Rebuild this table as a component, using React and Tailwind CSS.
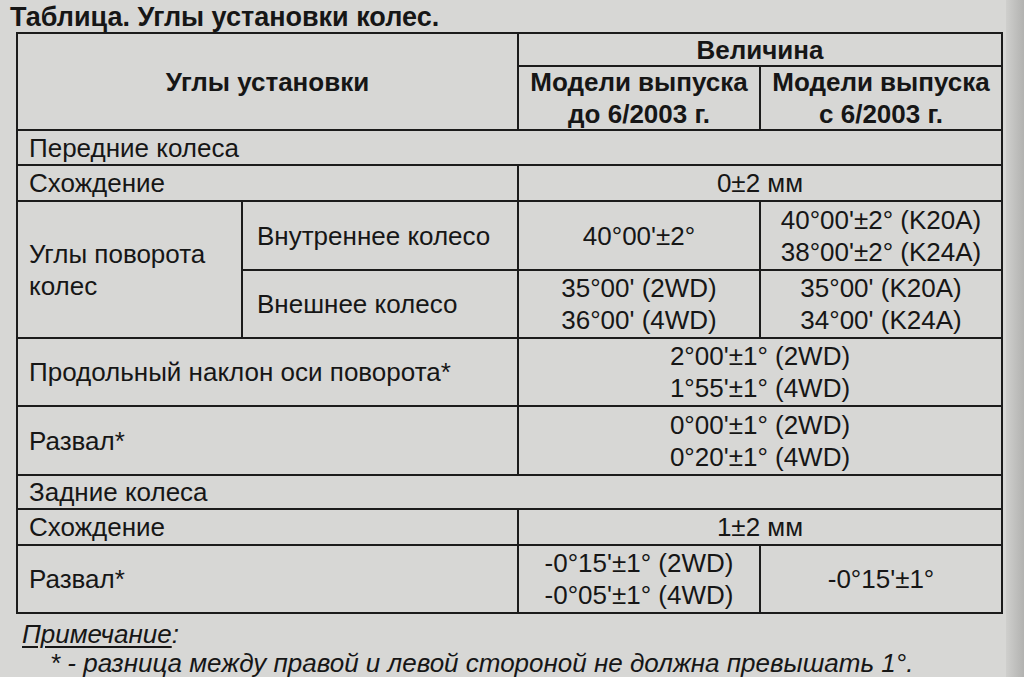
import React from "react";

const F = "font-['Liberation_Sans',Arial,Helvetica,sans-serif]";

function Cell({ className = "", children }) {
  return (
    <div className={`bg-[#d7d7d5] flex items-center text-[26px] leading-[32px] text-[#161616] ${className}`}>
      {children}
    </div>
  );
}

function Two({ a, b }) {
  return (
    <div className="flex flex-col items-center">
      <span>{a}</span>
      <span>{b}</span>
    </div>
  );
}

export default function App() {
  return (
    <div className={`w-[1024px] h-[677px] overflow-hidden bg-[#d7d7d5] flex ${F}`}>
      <div className="w-[1006px] flex flex-col">
        <div className="ml-[10px] mt-[2px] text-[27px] leading-[30px] font-bold text-[#161616]">
          Таблица. Углы установки колес.
        </div>
        <div className="ml-[16px] w-[987px] bg-[#1b1b1b] p-[2px] grid gap-[2px] grid-cols-[223px_274px_240px_240px] grid-rows-[31px_62px_33px_34px_67px_66px_66px_67px_32px_34px_66px]">
          <Cell className="col-span-2 row-span-2 justify-center font-bold">Углы установки</Cell>
          <Cell className="col-span-2 justify-center font-bold">Величина</Cell>
          <Cell className="justify-center font-bold leading-[25px]">
            <Two a="Модели выпуска" b="до 6/2003 г." />
          </Cell>
          <Cell className="justify-center font-bold leading-[25px]">
            <Two a="Модели выпуска" b="с 6/2003 г." />
          </Cell>

          <Cell className="col-span-4 pl-[11px]">Передние колеса</Cell>

          <Cell className="col-span-2 pl-[11px]">Схождение</Cell>
          <Cell className="col-span-2 justify-center">0±2 мм</Cell>

          <Cell className="row-span-2 pl-[11px]">
            <div className="flex flex-col">
              <span>Углы поворота</span>
              <span>колес</span>
            </div>
          </Cell>
          <Cell className="pl-[14px]">Внутреннее колесо</Cell>
          <Cell className="justify-center">40°00'±2°</Cell>
          <Cell className="justify-center leading-[31px]">
            <Two a="40°00'±2° (K20A)" b="38°00'±2° (K24A)" />
          </Cell>
          <Cell className="pl-[14px]">Внешнее колесо</Cell>
          <Cell className="justify-center">
            <Two a="35°00' (2WD)" b="36°00' (4WD)" />
          </Cell>
          <Cell className="justify-center">
            <Two a="35°00' (K20A)" b="34°00' (K24A)" />
          </Cell>

          <Cell className="col-span-2 pl-[11px]">Продольный наклон оси поворота*</Cell>
          <Cell className="col-span-2 justify-center">
            <Two a="2°00'±1° (2WD)" b="1°55'±1° (4WD)" />
          </Cell>

          <Cell className="col-span-2 pl-[11px]">Развал*</Cell>
          <Cell className="col-span-2 justify-center">
            <Two a="0°00'±1° (2WD)" b="0°20'±1° (4WD)" />
          </Cell>

          <Cell className="col-span-4 pl-[11px]">Задние колеса</Cell>

          <Cell className="col-span-2 pl-[11px]">Схождение</Cell>
          <Cell className="col-span-2 justify-center">1±2 мм</Cell>

          <Cell className="col-span-2 pl-[11px]">Развал*</Cell>
          <Cell className="justify-center">
            <Two a="-0°15'±1° (2WD)" b="-0°05'±1° (4WD)" />
          </Cell>
          <Cell className="justify-center">-0°15'±1°</Cell>
        </div>
        <div className="ml-[22px] mt-[6px] text-[26px] leading-[28px] italic text-[#161616]">
          <span className="underline decoration-[2px] underline-offset-[3px]">Примечание</span>:
        </div>
        <div className="ml-[50px] text-[26px] leading-[30px] italic text-[#161616]">
          * - разница между правой и левой стороной не должна превышать 1°.
        </div>
      </div>
      <div className="flex-1 bg-gradient-to-r from-[#cfcfcd] to-[#b2b2b0]" />
    </div>
  );
}
